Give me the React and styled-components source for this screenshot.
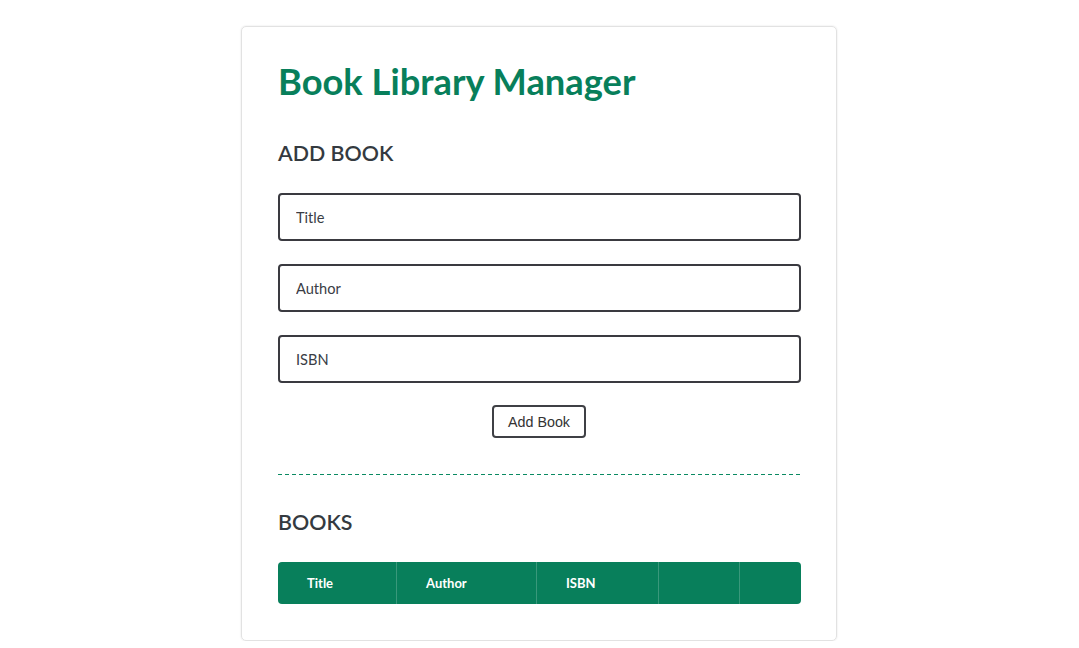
import styled, { createGlobalStyle } from 'styled-components'

const GlobalStyle = createGlobalStyle`
  body {
    margin: 0;
    background: #fff;
    font-family: Lato, "Liberation Sans", sans-serif;
    color: #333;
  }
`

const Page = styled.div`
  padding: 26px 1px 0 0;
  display: flex;
  justify-content: center;
`

const Card = styled.div`
  width: 596px;
  box-sizing: border-box;
  padding: 32px 35px 36px 36px;
  border: 1px solid #e2e2e2;
  border-radius: 5px;
  box-shadow: 0 0 2px rgba(0, 0, 0, 0.12);
`

const Title = styled.h1`
  margin: 0;
  font-size: 36.3px;
  font-weight: 700;
  color: #087f5b;
  line-height: 44px;
`

const Heading = styled.h2`
  margin: ${p => p.$top || 0}px 0 0;
  font-size: 21.4px;
  font-weight: 600;
  color: #343a40;
  line-height: 28px;
`

const Form = styled.form`
  display: flex;
  flex-direction: column;
  gap: 23px;
  margin-top: 26px;
`

const Input = styled.input`
  height: 48px;
  box-sizing: border-box;
  border: 2px solid #3a3a40;
  border-radius: 4px;
  padding: 0 16px;
  font-family: Lato, "Liberation Sans", sans-serif;
  font-size: 14.6px;
  color: #333;
  outline: none;
  &::placeholder {
    color: #3a3d45;
  }
`

const Button = styled.button`
  align-self: center;
  margin-top: -1px;
  margin-right: 1px;
  height: 33px;
  padding: 0 14px;
  background: #fff;
  border: 2px solid #3f4045;
  border-radius: 4px;
  font-family: Arial, "Liberation Sans", sans-serif;
  font-size: 14.3px;
  color: #333;
`

const Divider = styled.div`
  margin-top: 36px;
  height: 1px;
  background: repeating-linear-gradient(to right, #0a8a62 0 4px, transparent 4px 7px);
`

const Table = styled.table`
  width: 100%;
  margin-top: 26px;
  border-collapse: separate;
  border-spacing: 0;
  table-layout: fixed;
  background: #087f5b;
  border-radius: 4px;
  overflow: hidden;
`

const Th = styled.th`
  height: 42px;
  padding: 0 0 0 29px;
  text-align: left;
  font-size: 13px;
  font-weight: 700;
  color: #fff;
  border-left: 1px solid rgba(255, 255, 255, 0.2);
  &:first-child {
    border-left: none;
  }
`

const columns = [
  { label: 'Title', width: 118 },
  { label: 'Author', width: 140 },
  { label: 'ISBN', width: 122 },
  { label: '', width: 81 },
  { label: '', width: 62 },
]

function App () {
  return (
    <Page>
      <GlobalStyle />
      <Card>
        <Title>Book Library Manager</Title>
        <Heading $top={36}>ADD BOOK</Heading>
        <Form onSubmit={e => e.preventDefault()}>
          <Input placeholder="Title" />
          <Input placeholder="Author" />
          <Input placeholder="ISBN" />
          <Button type="submit">Add Book</Button>
        </Form>
        <Divider />
        <Heading $top={33}>BOOKS</Heading>
        <Table>
          <colgroup>
            {columns.map((c, i) => <col key={i} style={{ width: c.width }} />)}
          </colgroup>
          <thead>
            <tr>
              {columns.map((c, i) => <Th key={i}>{c.label}</Th>)}
            </tr>
          </thead>
        </Table>
      </Card>
    </Page>
  )
}

export default App
